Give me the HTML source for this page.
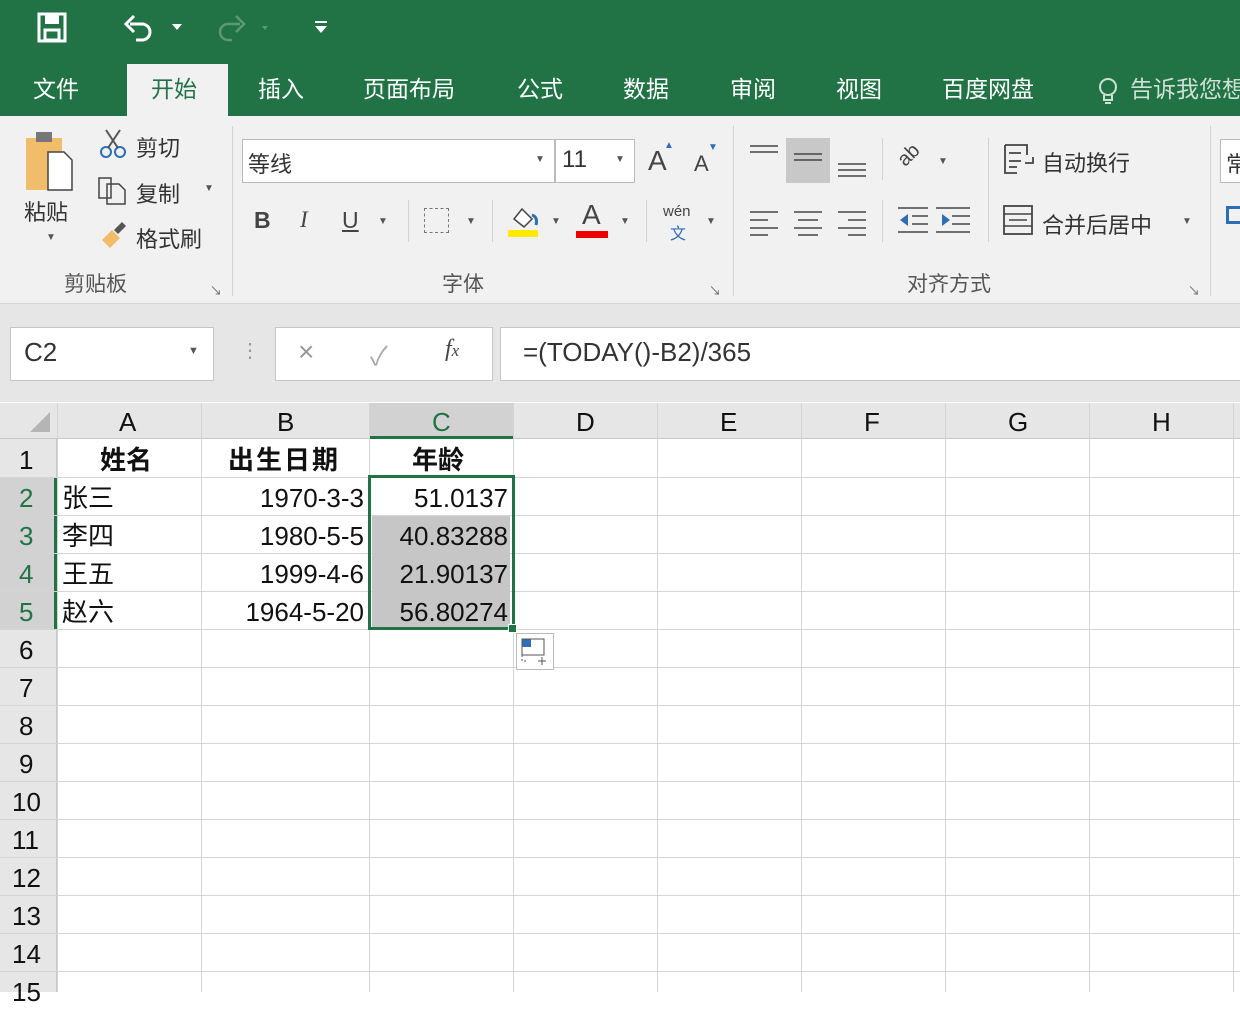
<!DOCTYPE html>
<html><head><meta charset="utf-8"><style>
*{margin:0;padding:0;box-sizing:border-box}
body{width:1240px;height:992px;overflow:hidden;background:#fff;font-family:"Liberation Sans","Noto Sans CJK SC",sans-serif;position:relative}
.a{position:absolute}
.t{position:absolute;white-space:nowrap}
.tab{position:absolute;top:70px;font-size:23px;color:#fff;white-space:nowrap}
.rb{color:#333;font-size:22px}
.grp{position:absolute;top:268px;font-size:21px;color:#555}
.sep{position:absolute;width:1px;background:#d2d2d2}
.cell{position:absolute;font-size:26px;color:#111;white-space:nowrap;line-height:38px}
</style></head><body>
<div class="a" style="left:0;top:0;width:1240px;height:116px;background:#217346"></div>
<svg class="a" style="left:36px;top:12px" width="36" height="32"><rect x="3" y="2" width="26" height="27" fill="none" stroke="#fff" stroke-width="3"/><rect x="9" y="3" width="14" height="9" fill="#fff"/><rect x="9" y="18" width="14" height="10" fill="none" stroke="#fff" stroke-width="3"/></svg>
<svg class="a" style="left:120px;top:10px" width="70" height="34"><path d="M10 14 H22 A8 8 0 0 1 22 30 H16" fill="none" stroke="#fff" stroke-width="3"/><path d="M14 6 L6 14 L14 22" fill="none" stroke="#fff" stroke-width="3"/><path d="M52 14 l5 6 l5 -6z" fill="#fff"/></svg>
<svg class="a" style="left:210px;top:10px" width="70" height="34"><path d="M30 14 H18 A8 8 0 0 0 18 30 H22" fill="none" stroke="#5a9a72" stroke-width="2.5"/><path d="M26 6 L34 14 L26 22" fill="none" stroke="#5a9a72" stroke-width="2.5"/><path d="M52 16 l3 4 l3 -4z" fill="#5a9a72"/></svg>
<svg class="a" style="left:312px;top:18px" width="20" height="20"><rect x="3" y="3" width="12" height="2" fill="#fff"/><path d="M3 8 h12 l-6 7z" fill="#fff"/></svg>
<div class="a" style="left:127px;top:64px;width:101px;height:52px;background:#f1f1f1"></div>
<div class="tab" style="left:33px">文件</div>
<div class="tab" style="left:151px;color:#217346">开始</div>
<div class="tab" style="left:258px">插入</div>
<div class="tab" style="left:363px">页面布局</div>
<div class="tab" style="left:517px">公式</div>
<div class="tab" style="left:623px">数据</div>
<div class="tab" style="left:730px">审阅</div>
<div class="tab" style="left:836px">视图</div>
<div class="tab" style="left:942px">百度网盘</div>
<svg class="a" style="left:1096px;top:76px" width="24" height="30"><circle cx="12" cy="11" r="8" fill="none" stroke="#cfe0d5" stroke-width="2"/><path d="M8 19 v5 h8 v-5 M9 27 h6" fill="none" stroke="#cfe0d5" stroke-width="2"/></svg>
<div class="tab" style="left:1130px;color:#cfe0d5">告诉我您想</div>
<div class="a" style="left:0;top:116px;width:1240px;height:188px;background:#f1f1f1;border-bottom:1px solid #d6d6d6"></div>
<div class="a" style="left:0;top:304px;width:1240px;height:98px;background:#e6e6e6"></div>
<svg class="a" style="left:22px;top:130px" width="64" height="64"><rect x="4" y="8" width="36" height="52" fill="#f2bd6b"/><rect x="14" y="2" width="16" height="10" fill="#777"/><path d="M26 22 h16 l8 8 v30 h-24z" fill="#fff" stroke="#444" stroke-width="1.5"/></svg>
<div class="t rb" style="left:24px;top:195px">粘贴</div>
<div class="t" style="left:46px;top:232px;font-size:10px;color:#555">▼</div>
<svg class="a" style="left:98px;top:128px" width="32" height="32"><circle cx="8" cy="24" r="5" fill="none" stroke="#2f6db5" stroke-width="2"/><circle cx="22" cy="24" r="5" fill="none" stroke="#2f6db5" stroke-width="2"/><path d="M10 20 L22 2 M20 20 L8 2" stroke="#555" stroke-width="2"/></svg>
<div class="t rb" style="left:136px;top:131px">剪切</div>
<svg class="a" style="left:97px;top:176px" width="32" height="30"><path d="M2 2 h12 v20 h-12z M10 8 h12 l6 6 v14 h-18z" fill="#f1f1f1" stroke="#444" stroke-width="1.5"/></svg>
<div class="t rb" style="left:136px;top:177px">复制</div>
<div class="t" style="left:204px;top:183px;font-size:10px;color:#555">▼</div>
<svg class="a" style="left:98px;top:220px" width="32" height="32"><path d="M4 20 l10 -10 l8 8 l-10 10z" fill="#f2bd6b"/><path d="M16 10 l8 -8 l4 4 l-8 8z" fill="#555"/></svg>
<div class="t rb" style="left:136px;top:222px">格式刷</div>
<div class="grp" style="left:64px">剪贴板</div>
<div class="t" style="left:210px;top:282px;font-size:12px;color:#666">↘</div>
<div class="sep" style="left:232px;top:126px;height:170px"></div>
<div class="a" style="left:242px;top:139px;width:313px;height:44px;background:#fff;border:1px solid #bbb"></div>
<div class="t rb" style="left:248px;top:147px">等线</div>
<div class="t" style="left:535px;top:154px;font-size:10px;color:#555">▼</div>
<div class="a" style="left:555px;top:139px;width:80px;height:44px;background:#fff;border:1px solid #bbb"></div>
<div class="t" style="left:562px;top:146px;font-size:24px;color:#333">11</div>
<div class="t" style="left:615px;top:154px;font-size:10px;color:#555">▼</div>
<div class="t" style="left:648px;top:145px;font-size:28px;color:#444">A</div><div class="t" style="left:664px;top:140px;font-size:10px;color:#2f6db5">▲</div>
<div class="t" style="left:694px;top:151px;font-size:22px;color:#444">A</div><div class="t" style="left:708px;top:142px;font-size:10px;color:#2f6db5">▼</div>
<div class="t" style="left:254px;top:207px;font-size:23px;font-weight:bold;color:#444">B</div>
<div class="t" style="left:300px;top:207px;font-size:23px;font-style:italic;font-family:'Liberation Serif',serif;color:#444">I</div>
<div class="t" style="left:342px;top:207px;font-size:23px;text-decoration:underline;color:#444">U</div>
<div class="t" style="left:378px;top:216px;font-size:10px;color:#555">▼</div>
<div class="sep" style="left:408px;top:200px;height:42px"></div>
<div class="a" style="left:424px;top:208px;width:25px;height:25px;border:1px dashed #777"></div>
<div class="t" style="left:466px;top:216px;font-size:10px;color:#555">▼</div>
<div class="sep" style="left:492px;top:200px;height:42px"></div>
<svg class="a" style="left:506px;top:203px" width="40" height="36"><path d="M8 16 l8 -10 l10 10 l-8 8z" fill="#fff" stroke="#444" stroke-width="1.5"/><path d="M26 12 q6 2 4 10" fill="none" stroke="#2f6db5" stroke-width="3"/><rect x="2" y="27" width="30" height="7" fill="#ffea00"/></svg>
<div class="t" style="left:551px;top:216px;font-size:10px;color:#555">▼</div>
<div class="t" style="left:582px;top:199px;font-size:28px;color:#444">A</div>
<div class="a" style="left:576px;top:231px;width:32px;height:7px;background:#e00"></div>
<div class="t" style="left:620px;top:216px;font-size:10px;color:#555">▼</div>
<div class="sep" style="left:646px;top:200px;height:42px"></div>
<div class="t" style="left:663px;top:203px;font-size:15px;color:#444">wén</div>
<div class="t" style="left:670px;top:220px;font-size:16px;color:#2f6db5">文</div>
<div class="t" style="left:706px;top:216px;font-size:10px;color:#555">▼</div>
<div class="grp" style="left:442px">字体</div>
<div class="t" style="left:709px;top:282px;font-size:12px;color:#666">↘</div>
<div class="sep" style="left:733px;top:126px;height:170px"></div>
<div class="a" style="left:786px;top:138px;width:44px;height:45px;background:#c8c8c8"></div>
<svg class="a" style="left:748px;top:140px" width="120" height="40"><g stroke="#444" stroke-width="1.6"><path d="M2 6h28M2 12h28"/><path d="M46 14h28M46 20h28"/><path d="M90 24h28M90 30h28M90 36h28"/></g></svg>
<svg class="a" style="left:748px;top:208px" width="120" height="28"><g stroke="#444" stroke-width="1.6"><path d="M2 4h28M2 12h18M2 20h28M2 27h18"/><path d="M46 4h28M50 12h20M46 20h28M50 27h20"/><path d="M90 4h28M100 12h18M90 20h28M100 27h18"/></g></svg>
<div class="sep" style="left:882px;top:138px;height:42px"></div>
<div class="sep" style="left:882px;top:200px;height:42px"></div>
<div class="t" style="left:898px;top:144px;font-size:20px;color:#444;transform:rotate(-45deg)">ab</div>
<div class="t" style="left:938px;top:156px;font-size:10px;color:#555">▼</div>
<svg class="a" style="left:896px;top:206px" width="80" height="30"><g stroke="#444" stroke-width="1.6"><path d="M2 2h30M16 10h16M16 18h16M2 26h30M40 2h34M56 10h18M56 18h18M40 26h34"/></g><path d="M4 14l8-6v12z M54 14l-8-6v12z" fill="#2f6db5"/></svg>
<div class="sep" style="left:988px;top:138px;height:104px"></div>
<svg class="a" style="left:1003px;top:143px" width="34" height="32"><path d="M2 2h22v10M2 2v28h12M6 10h12M6 18h12M6 24h8M30 14v6h-8" fill="none" stroke="#444" stroke-width="1.8"/></svg>
<div class="t rb" style="left:1042px;top:146px">自动换行</div>
<svg class="a" style="left:1003px;top:205px" width="32" height="32"><rect x="1" y="1" width="28" height="28" fill="none" stroke="#444" stroke-width="1.8"/><path d="M1 9h28M1 21h28M6 15h18" stroke="#444" stroke-width="1.5"/></svg>
<div class="t rb" style="left:1042px;top:208px">合并后居中</div>
<div class="t" style="left:1182px;top:216px;font-size:10px;color:#555">▼</div>
<div class="grp" style="left:907px">对齐方式</div>
<div class="t" style="left:1188px;top:282px;font-size:12px;color:#666">↘</div>
<div class="sep" style="left:1210px;top:126px;height:170px"></div>
<div class="a" style="left:1220px;top:139px;width:30px;height:44px;background:#fff;border:1px solid #bbb"></div>
<div class="t rb" style="left:1226px;top:147px">常</div>
<div class="a" style="left:1226px;top:206px;width:20px;height:18px;border:3px solid #2f6db5"></div>
<div class="a" style="left:10px;top:327px;width:204px;height:54px;background:#fff;border:1px solid #c6c6c6"></div>
<div class="t" style="left:24px;top:337px;font-size:26px;color:#333">C2</div>
<div class="t" style="left:188px;top:345px;font-size:11px;color:#555">▼</div>
<div class="t" style="left:240px;top:338px;font-size:20px;color:#999">⋮</div>
<div class="a" style="left:275px;top:327px;width:218px;height:54px;background:#fff;border:1px solid #c6c6c6"></div>
<div class="t" style="left:298px;top:336px;font-size:28px;color:#999">×</div>
<div class="t" style="left:370px;top:336px;font-size:26px;color:#aaa">✓</div>
<div class="t" style="left:445px;top:336px;font-size:24px;font-style:italic;font-family:'Liberation Serif',serif;color:#444">f<span style="font-size:17px">x</span></div>
<div class="a" style="left:500px;top:327px;width:760px;height:54px;background:#fff;border:1px solid #c6c6c6"></div>
<div class="t" style="left:523px;top:337px;font-size:26px;color:#333">=(TODAY()-B2)/365</div>
<div class="a" style="left:0;top:403px;width:1240px;height:36px;background:#e6e6e6;border-bottom:1px solid #c8c8c8"></div>
<div class="a" style="left:0;top:439px;width:57px;height:553px;background:#e6e6e6;border-right:1px solid #c8c8c8"></div>
<div class="a" style="left:369px;top:403px;width:144px;height:36px;background:#d2d2d2;border-bottom:3px solid #217346"></div>
<div class="a" style="left:0;top:477px;width:57px;height:152px;background:#d2d2d2;border-right:3px solid #217346"></div>
<svg class="a" style="left:28px;top:410px" width="24" height="24"><path d="M22 2 V22 H2z" fill="#b5b5b5"/></svg>
<svg class="a" style="left:0;top:403px" width="1240" height="589">
<g stroke="#d4d4d4" stroke-width="1">
<path d="M57.5 0V589M201.5 0V589M369.5 0V589M513.5 0V589M657.5 0V589M801.5 0V589M945.5 0V589M1089.5 0V589M1233.5 0V589"/>
<path d="M0 74.5H1240M0 112.5H1240M0 150.5H1240M0 188.5H1240M0 226.5H1240M0 264.5H1240M0 302.5H1240M0 340.5H1240M0 378.5H1240M0 416.5H1240M0 454.5H1240M0 492.5H1240M0 530.5H1240M0 568.5H1240"/>
</g></svg>
<div class="cell" style="left:119px;top:403px">A</div>
<div class="cell" style="left:277px;top:403px">B</div>
<div class="cell" style="left:432px;top:403px;color:#217346">C</div>
<div class="cell" style="left:576px;top:403px">D</div>
<div class="cell" style="left:720px;top:403px">E</div>
<div class="cell" style="left:864px;top:403px">F</div>
<div class="cell" style="left:1008px;top:403px">G</div>
<div class="cell" style="left:1152px;top:403px">H</div>
<div class="cell" style="left:19px;top:441px">1</div>
<div class="cell" style="left:19px;top:479px;color:#217346">2</div>
<div class="cell" style="left:19px;top:517px;color:#217346">3</div>
<div class="cell" style="left:19px;top:555px;color:#217346">4</div>
<div class="cell" style="left:19px;top:593px;color:#217346">5</div>
<div class="cell" style="left:19px;top:631px">6</div>
<div class="cell" style="left:19px;top:669px">7</div>
<div class="cell" style="left:19px;top:707px">8</div>
<div class="cell" style="left:19px;top:745px">9</div>
<div class="cell" style="left:12px;top:783px">10</div>
<div class="cell" style="left:12px;top:821px">11</div>
<div class="cell" style="left:12px;top:859px">12</div>
<div class="cell" style="left:12px;top:897px">13</div>
<div class="cell" style="left:12px;top:935px">14</div>
<div class="cell" style="left:12px;top:973px">15</div>
<div class="a" style="left:372px;top:516px;width:138px;height:111px;background:#c6c6c6"></div>
<div class="cell" style="left:100px;top:441px;font-weight:bold">姓名</div>
<div class="cell" style="left:228px;top:441px;font-weight:bold;letter-spacing:2px">出生日期</div>
<div class="cell" style="left:412px;top:441px;font-weight:bold">年龄</div>
<div class="cell" style="left:62px;top:479px">张三</div>
<div class="cell" style="left:62px;top:517px">李四</div>
<div class="cell" style="left:62px;top:555px">王五</div>
<div class="cell" style="left:62px;top:593px">赵六</div>
<div class="cell" style="right:876px;top:479px">1970-3-3</div>
<div class="cell" style="right:876px;top:517px">1980-5-5</div>
<div class="cell" style="right:876px;top:555px">1999-4-6</div>
<div class="cell" style="right:876px;top:593px">1964-5-20</div>
<div class="cell" style="right:732px;top:479px">51.0137</div>
<div class="cell" style="right:732px;top:517px">40.83288</div>
<div class="cell" style="right:732px;top:555px">21.90137</div>
<div class="cell" style="right:732px;top:593px">56.80274</div>
<div class="a" style="left:368px;top:475px;width:147px;height:155px;border:3px solid #217346"></div>
<div class="a" style="left:508px;top:624px;width:9px;height:9px;background:#217346;border:1px solid #fff"></div>
<div class="a" style="left:516px;top:633px;width:38px;height:37px;background:#fff;border:1px solid #bbb"></div>
<svg class="a" style="left:520px;top:637px" width="32" height="30"><rect x="2" y="2" width="9" height="8" fill="#2f6db5"/><rect x="2" y="2" width="22" height="16" fill="none" stroke="#555" stroke-width="1"/><path d="M2 18v6h6" stroke="#555" stroke-dasharray="2 2" fill="none"/><path d="M22 20v8M18 24h8" stroke="#555"/></svg>
</body></html>
